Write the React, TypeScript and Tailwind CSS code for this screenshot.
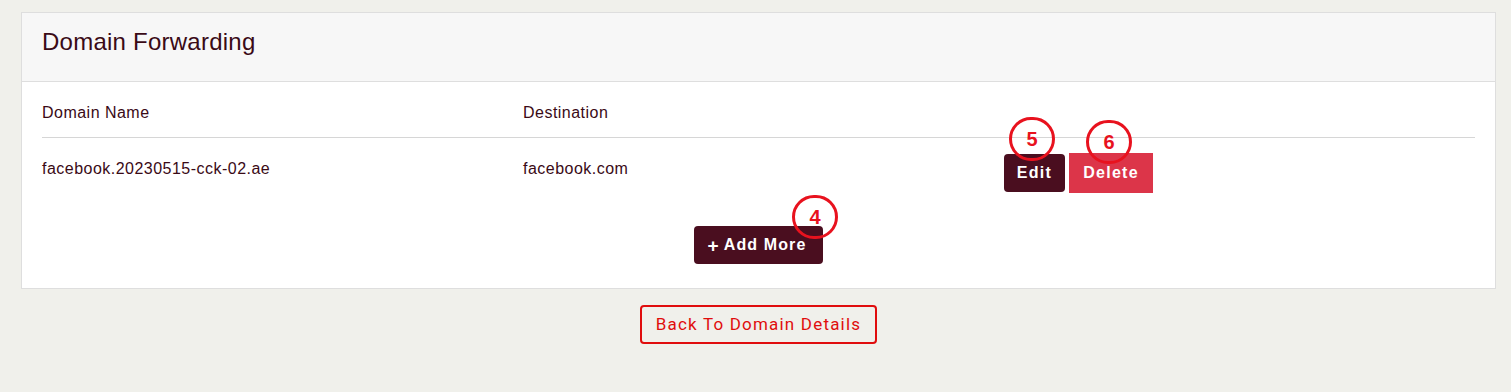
import React from 'react';

function Marker({ n, className }: { n: string; className: string }) {
  return (
    <span
      className={`absolute flex h-[44px] w-[46px] items-center justify-center rounded-full border-[3px] border-[#e8121e] text-[20px] font-bold tracking-normal text-[#e8121e] ${className}`}
    >
      {n}
    </span>
  );
}

export default function App() {
  return (
    <div className="min-h-[392px] bg-[#f0f0eb] pt-3 font-['Liberation_Sans',Arial,sans-serif] text-[#3a0a16]">
      <div className="mx-[21px] w-[1475px] border border-[#dedede] bg-white">
        <div className="h-[69px] border-b border-[#dedede] bg-[#f7f7f7] px-5 pt-[14px]">
          <h2 className="text-[24px] leading-[30px] tracking-[0.01em]">Domain Forwarding</h2>
        </div>
        <div className="px-5">
          <div className="grid h-[56px] grid-cols-[481px_481px_1fr] items-center border-b border-[#d6d6d6] pt-[6px] text-[16px] tracking-[0.03em]">
            <span>Domain Name</span>
            <span>Destination</span>
            <span />
          </div>
          <div className="grid grid-cols-[481px_481px_1fr] pt-[21px] text-[16px] tracking-[0.03em]">
            <span className="leading-5">facebook.20230515-cck-02.ae</span>
            <span className="leading-5">facebook.com</span>
            <div className="relative -mt-[5px] flex items-start gap-1">
              <button className="relative h-[38px] w-[61px] rounded bg-[#4a0e1f] text-[16px] font-bold tracking-[0.08em] text-white">
                Edit
                <Marker n="5" className="-top-[37px] left-[5px]" />
              </button>
              <button className="relative -mt-px h-[40px] w-[84px] bg-[#dc3549] text-[16px] font-bold tracking-[0.08em] text-white">
                Delete
                <Marker n="6" className="-top-[33px] left-[17px]" />
              </button>
            </div>
          </div>
          <div className="flex justify-center pb-6 pt-[33px]">
            <button className="relative flex h-[38px] w-[129px] items-center justify-center gap-1 rounded bg-[#4a0e1f] pr-[3px] text-[16px] font-bold tracking-[0.07em] text-white">
              <span className="text-[19px] leading-none">+</span>
              Add More
              <Marker n="4" className="-top-[31px] left-[98px]" />
            </button>
          </div>
        </div>
      </div>
      <div className="flex justify-center pl-[6px] pt-[16px]">
        <button className="h-[39px] w-[237px] rounded border-2 border-[#e00d0d] font-['Roboto',sans-serif] text-[17px] tracking-[0.07em] text-[#e00d0d]">
          Back To Domain Details
        </button>
      </div>
    </div>
  );
}
